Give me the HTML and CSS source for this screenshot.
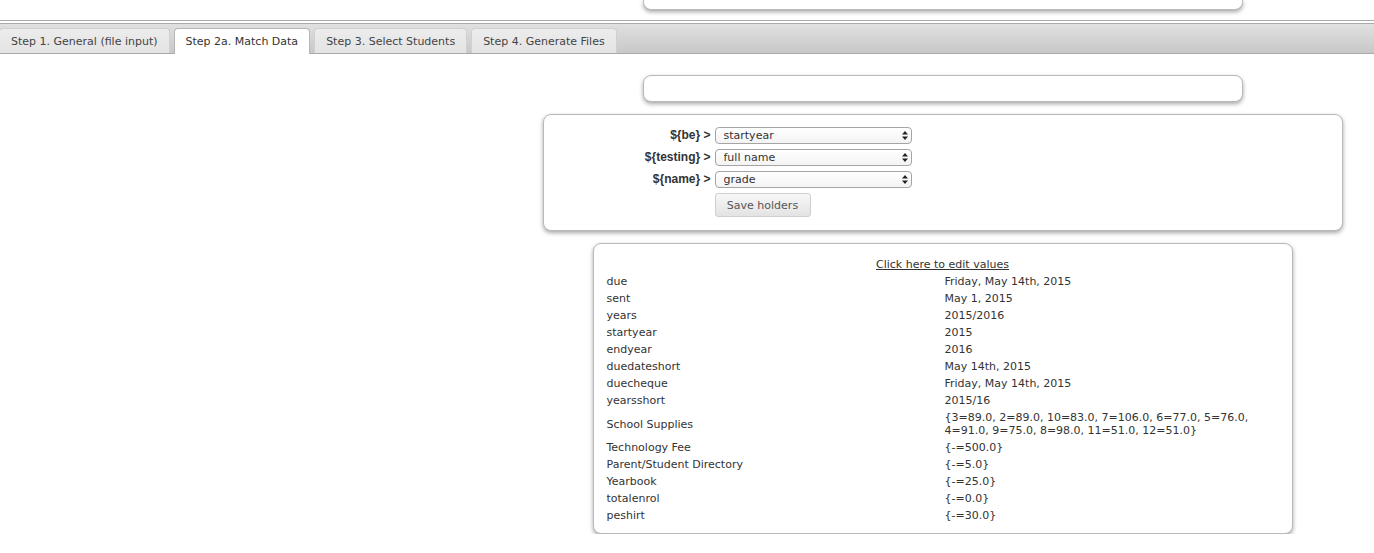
FILE: index.html
```html
<!DOCTYPE html>
<html>
<head>
<meta charset="utf-8">
<link rel="stylesheet" href="styles.css">
</head>
<body>
<div class="column">
  <div class="card card-top"></div>
</div>
<div class="rule"></div>
<nav class="tabbar">
  <a class="tab">Step 1. General (file input)</a>
  <a class="tab active">Step 2a. Match Data</a>
  <a class="tab">Step 3. Select Students</a>
  <a class="tab">Step 4. Generate Files</a>
</nav>
<main class="column main">
  <div class="card card-empty"></div>

  <form class="card card-form">
    <div class="form-grid">
      <label class="holder">${be} &gt;</label>
      <div class="select-wrap">
        <select class="select"><option>startyear</option></select>
        <svg class="arrows" width="6" height="9" viewBox="0 0 6 9"><path d="M3 0 L6 3.5 L0 3.5 Z M0 5.5 L6 5.5 L3 9 Z" fill="#222"/></svg>
      </div>
      <label class="holder">${testing} &gt;</label>
      <div class="select-wrap">
        <select class="select"><option>full name</option></select>
        <svg class="arrows" width="6" height="9" viewBox="0 0 6 9"><path d="M3 0 L6 3.5 L0 3.5 Z M0 5.5 L6 5.5 L3 9 Z" fill="#222"/></svg>
      </div>
      <label class="holder">${name} &gt;</label>
      <div class="select-wrap">
        <select class="select"><option>grade</option></select>
        <svg class="arrows" width="6" height="9" viewBox="0 0 6 9"><path d="M3 0 L6 3.5 L0 3.5 Z M0 5.5 L6 5.5 L3 9 Z" fill="#222"/></svg>
      </div>
      <span></span>
      <div><button type="button" class="btn">Save holders</button></div>
    </div>
  </form>

  <section class="card card-values">
    <div class="edit-link"><a href="#">Click here to edit values</a></div>
    <table class="values">
      <tr><td>due</td><td>Friday, May 14th, 2015</td></tr>
      <tr><td>sent</td><td>May 1, 2015</td></tr>
      <tr><td>years</td><td>2015/2016</td></tr>
      <tr><td>startyear</td><td>2015</td></tr>
      <tr><td>endyear</td><td>2016</td></tr>
      <tr><td>duedateshort</td><td>May 14th, 2015</td></tr>
      <tr><td>duecheque</td><td>Friday, May 14th, 2015</td></tr>
      <tr><td>yearsshort</td><td>2015/16</td></tr>
      <tr><td>School Supplies</td><td>{3=89.0, 2=89.0, 10=83.0, 7=106.0, 6=77.0, 5=76.0, 4=91.0, 9=75.0, 8=98.0, 11=51.0, 12=51.0}</td></tr>
      <tr><td>Technology Fee</td><td>{-=500.0}</td></tr>
      <tr><td>Parent/Student Directory</td><td>{-=5.0}</td></tr>
      <tr><td>Yearbook</td><td>{-=25.0}</td></tr>
      <tr><td>totalenrol</td><td>{-=0.0}</td></tr>
      <tr><td>peshirt</td><td>{-=30.0}</td></tr>
    </table>
  </section>
</main>
</body>
</html>
```

FILE: styles.css
```css
* { box-sizing: border-box; }
html, body { margin: 0; padding: 0; background: #fff; }
body {
  font-family: "DejaVu Sans", Verdana, sans-serif;
  font-size: 11px;
  line-height: 13px;
  color: #333;
}

.column {
  margin-left: 511px;
  display: flex;
  flex-direction: column;
  align-items: center;
}

.card {
  background: #fff;
  border: 1px solid #b9b9b9;
  border-radius: 8px;
  box-shadow: 0 2px 4px rgba(0, 0, 0, 0.35);
}

.card-top {
  width: 600px;
  height: 10px;
  border-top: 0;
  border-radius: 0 0 8px 8px;
}

.rule {
  margin-top: 10px;
  height: 1px;
  background: #aaa;
}

.tabbar {
  margin-top: 2px;
  height: 31px;
  border-top: 1px solid #a9a9a9;
  border-bottom: 1px solid #a9a9a9;
  background: linear-gradient(#e0e0e0, #c8c8c8);
  display: flex;
  align-items: flex-end;
  gap: 4px;
  padding-left: 0;
}

.tab {
  height: 25px;
  padding: 0 11px;
  display: flex;
  align-items: center;
  border: 1px solid #d0d0d0;
  border-bottom: 0;
  border-radius: 4px 4px 0 0;
  background: linear-gradient(#ececec, #e4e4e4);
  color: #444;
  cursor: pointer;
}
.tab:first-child { margin-left: -1px; }

.tab.active {
  height: 26px;
  margin-bottom: -1px;
  background: #fff;
  border-color: #b5b5b5;
  color: #333;
}

.main {
  padding-top: 21px;
  gap: 12px;
}

.card-empty {
  width: 600px;
  height: 27px;
}

.card-form {
  width: 800px;
  margin: 0;
  padding: 12px 0 13px;
}

.form-grid {
  display: grid;
  grid-template-columns: 167px 197px;
  column-gap: 4px;
  row-gap: 5px;
  align-items: center;
}

.holder {
  text-align: right;
  font-family: "Liberation Sans", Arial, sans-serif;
  font-size: 12px;
  font-weight: bold;
  color: #333;
  white-space: nowrap;
}

.select-wrap { position: relative; height: 17px; }

.select {
  -webkit-appearance: none;
  appearance: none;
  width: 197px;
  height: 17px;
  margin: 0;
  padding: 0 0 0 8px;
  border: 1px solid #a5a5a5;
  border-radius: 4px;
  background: linear-gradient(#fff, #f3f3f3);
  font-family: inherit;
  font-size: 11px;
  line-height: 15px;
  color: #333;
}

.arrows {
  position: absolute;
  right: 4px;
  top: 4px;
  pointer-events: none;
}

.btn {
  width: 96px;
  height: 24px;
  margin: 0;
  padding: 0;
  border: 1px solid #cfcfcf;
  border-radius: 3px;
  background: linear-gradient(#f7f7f7, #e3e3e3);
  font-family: inherit;
  font-size: 11px;
  color: #555;
}

.card-values {
  width: 700px;
  padding: 12px 11px 9px;
}

.edit-link {
  text-align: center;
  padding: 2px 0;
}
.edit-link a { color: #333; text-decoration: underline; }

.values {
  width: 100%;
  border-collapse: collapse;
  table-layout: fixed;
}
.values td {
  width: 50%;
  padding: 2px;
  vertical-align: middle;
  color: #333;
}
```
